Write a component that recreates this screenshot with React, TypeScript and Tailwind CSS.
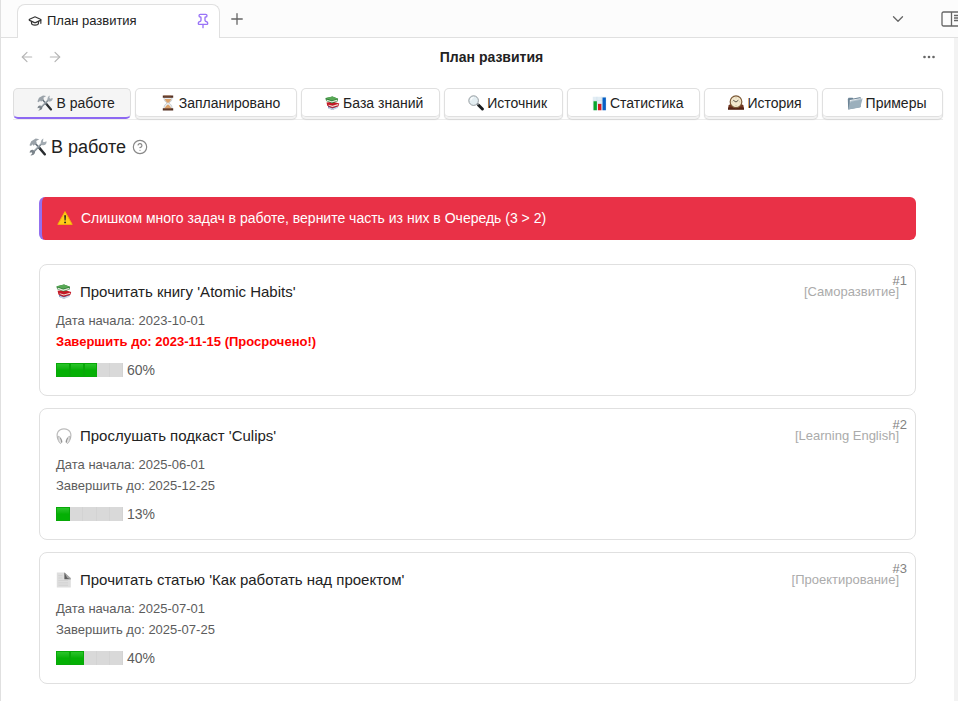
import type { ReactNode } from 'react';
import { ArrowLeft, ArrowRight, ChevronDown, GraduationCap, Pin, Plus, CircleHelp } from 'lucide-react';

type IconProps = { className?: string };

function Tools({ className }: IconProps) {
  return (
    <svg viewBox="0 0 20 20" className={className} aria-hidden="true">
      <path d="M11.500 11 17.500 18" stroke="#292d30" strokeWidth="2.800" strokeLinecap="round" />
      <path d="M5.500 4.500 12 11.500" stroke="#65707a" strokeWidth="1.800" />
      <path d="M.500 8 2.500 3.500 7.500 .500l4 .800-3.500 2L8.500 5.500 5 8.500 3.800 7 2.300 9z" fill="#9aa2a9" />
      <path d="M4 16.500 15 5.500" stroke="#828c94" strokeWidth="1.900" strokeLinecap="round" />
      <path d="M16 .500 15.500 3.800 16.500 4.800 19.500 3.700C20 7 17 9 14.300 7.800 12 6 13.200 1.500 16 .500z" fill="#a3abb2" />
      <path d="M6.500 14.500C7.500 17.500 4.500 20 1.500 19.300L4 17.300 3.200 15.800.700 16.500C.800 13.300 3.800 12 6.500 14.500z" fill="#7a838a" />
      <path d="m5 14.500 8-8" stroke="#c7ced2" strokeWidth=".7" />
    </svg>
  );
}

function Hourglass({ className }: IconProps) {
  return (
    <svg viewBox="0 0 20 20" className={className} aria-hidden="true">
      <path d="M5 3h10c0 4-1 5-4 7 3 2 4 3 4 7H5c0-4 1-5 4-7-3-2-4-3-4-7z" fill="#e8edf0" stroke="#aeb5ba" strokeWidth=".7" />
      <path d="M6 5h8c-.5 2.500-2 3.500-4 5-2-1.500-3.500-2.500-4-5zM10 12c2 1.500 3.500 2.500 4 5H6c.5-2.500 2-3.500 4-5z" fill="#dca36d" />
      <path d="M3.500 .500h13v3h-13zM3.500 16.500h13v3h-13z" fill="#543022" />
      <path d="M5 1.200h9M5 17.200h9" stroke="#a66b49" strokeWidth=".8" />
    </svg>
  );
}

function Books({ className }: IconProps) {
  return (
    <svg viewBox="0 0 20 20" className={className} aria-hidden="true">
      <path d="m4 13 10-1.500 3.500 3-7.500 4-6-2.500z" fill="#4a5fa0" />
      <path d="m4.500 14.800 5.500 1.700 7-2.500v2l-7 2.700-5.500-2z" fill="#ced7e3" />
      <path d="m2 8.500 9-1 8 2.500-1 3.500-8.500 2.500-6.500-3z" fill="#c41a27" />
      <path d="m4.500 11.500 5.500 1.500 7.500-2.200v1.500L9.700 14.500l-5-2z" fill="#f1e5dc" />
      <path d="M.500 3 10 .500l7.500 3-.5 3.500-7.500 2.500-8-3z" fill="#287a32" />
      <path d="m2 4.500 7 2.500 7.500-2.200v1.700L9 8.700 2 6.200z" fill="#e0e6d7" />
      <path d="m.500 2.800 9.500-2.300 7.500 3L9 6z" fill="#58a855" />
    </svg>
  );
}

function Magnifier({ className }: IconProps) {
  return (
    <svg viewBox="0 0 20 20" className={className} aria-hidden="true">
      <path d="m13 12.500 5 5" stroke="#171a1c" strokeWidth="3.600" strokeLinecap="round" />
      <path d="m11 10.500 2 2" stroke="#899197" strokeWidth="2" />
      <circle cx="7" cy="7" r="6" fill="#e4eef2" stroke="#7d858a" strokeWidth="1" />
      <path d="M3.500 7A4 4 0 0 1 7 3" stroke="#fff" strokeWidth="1.300" fill="none" />
    </svg>
  );
}

function Chart({ className }: IconProps) {
  return (
    <svg viewBox="0 0 20 20" className={className} aria-hidden="true">
      <path d="M1 1h18v18H1z" fill="#e2edf4" />
      <path d="M1 6h18M1 11h18M6.500 1v18M12.500 1v18" stroke="#c9dce8" strokeWidth=".6" />
      <path d="M2 7h4.500v12H2z" fill="#09a52b" />
      <path d="M8 10.500h4.500V19H8z" fill="#d71920" />
      <path d="M14 2h4.500v17H14z" fill="#075fc5" />
    </svg>
  );
}

function Clock({ className }: IconProps) {
  return (
    <svg viewBox="0 0 20 20" className={className} aria-hidden="true">
      <path d="M.500 17v-4l3-2h13l3 2v4z" fill="#713620" />
      <path d="M0 15.500h20v3H0z" fill="#542313" />
      <circle cx="10" cy="8.500" r="7.300" fill="#f3e8cd" stroke="#7c5a37" strokeWidth="1.500" />
      <path d="m6.500 6.500 3.500 2.300 3-2.300" stroke="#343029" strokeWidth="1" fill="none" />
      <path d="M10 3.200v.8M4.800 8.500h.8M14.400 8.500h.8M10 13v.8" stroke="#8a8069" strokeWidth=".8" />
    </svg>
  );
}

function Folder({ className }: IconProps) {
  return (
    <svg viewBox="0 0 20 20" className={className} aria-hidden="true">
      <path d="m1 5 1-1.500h5L8 4.500l9-2V15L1.500 18z" fill="#6c8496" />
      <path d="m3.500 6.200 13-2v9l-13 2z" fill="#edf1f3" />
      <path d="M4.500 7.500 19.500 4.500 16.500 15.500 1.500 18z" fill="#9bafbc" />
      <path d="m5 7.800 14-2.800" stroke="#c9d5dc" strokeWidth=".8" />
    </svg>
  );
}

function Headphones({ className }: IconProps) {
  return (
    <svg viewBox="0 0 20 20" className={className} aria-hidden="true">
      <path d="M3 15C-1 7 3 1 10 1s11 6 7 14" fill="none" stroke="#bcbcbc" strokeWidth="1.500" />
      <path d="M2.500 10.500C4.500 10 7 13 7.500 17.500l-1.700 2C3.500 18.500 2 14.500 2.500 10.500zM17.500 10.500C15.500 10 13 13 12.500 17.500l1.700 2c2.300-1 3.800-5 3.300-9z" fill="#e0e0e0" stroke="#a0a0a0" strokeWidth=".8" />
      <path d="M5 12.500c1 1 2 3 2.200 5.500M15 12.500c-1 1-2 3-2.200 5.500" stroke="#858585" strokeWidth="1.100" fill="none" />
    </svg>
  );
}

function Page({ className }: IconProps) {
  return (
    <svg viewBox="0 0 20 20" className={className} aria-hidden="true">
      <path d="M1 .500h10l7.500 8.500v10.500H1z" fill="#dedede" />
      <path d="M10.500 .500v8.500h8z" fill="#5d5d5d" />
      <path d="m10.500 .500 8 7V9L14 7.500z" fill="#a5a5a5" />
      <path d="M3 4.500h5M3 7.500h5M3 10.500h12M3 13.500h12M3 16.500h12" stroke="#c9c9c9" strokeWidth=".8" />
    </svg>
  );
}

function Warning({ className }: IconProps) {
  return (
    <svg viewBox="0 0 20 20" className={className} aria-hidden="true">
      <path d="M10 2 19 18H1z" fill="#ffcd18" stroke="#f3b40c" strokeWidth="1.200" strokeLinejoin="round" />
      <path d="M9 6.500h2.200l-.4 6.500H9.400z" fill="#292521" />
      <circle cx="10.100" cy="15.500" r="1.200" fill="#292521" />
    </svg>
  );
}

function SidebarIcon({ className }: IconProps) {
  return (
    <svg viewBox="0 0 21 16" className={className} fill="none" stroke="currentColor" strokeWidth="1.300" aria-hidden="true">
      <rect x="1" y="1" width="19" height="14" rx="1.500" />
      <path d="M10.500 1v14M13 4.500h5M13 7h5M13 9.500h5" />
    </svg>
  );
}

const sections: { label: string; icon: ReactNode }[] = [
  { label: 'В работе', icon: <Tools className="size-4" /> },
  { label: 'Запланировано', icon: <Hourglass className="size-4" /> },
  { label: 'База знаний', icon: <Books className="size-[15px]" /> },
  { label: 'Источник', icon: <Magnifier className="size-4" /> },
  { label: 'Статистика', icon: <Chart className="size-[15px]" /> },
  { label: 'История', icon: <Clock className="size-4" /> },
  { label: 'Примеры', icon: <Folder className="size-4" /> },
];

type Task = {
  title: string;
  icon: ReactNode;
  category: string;
  start: string;
  due: string;
  overdue?: boolean;
  filled: number;
  percent: number;
};

const tasks: Task[] = [
  { title: "Прочитать книгу 'Atomic Habits'", icon: <Books className="size-4" />, category: 'Саморазвитие', start: '2023-10-01', due: '2023-11-15', overdue: true, filled: 3, percent: 60 },
  { title: "Прослушать подкаст 'Culips'", icon: <Headphones className="size-4" />, category: 'Learning English', start: '2025-06-01', due: '2025-12-25', filled: 1, percent: 13 },
  { title: "Прочитать статью 'Как работать над проектом'", icon: <Page className="size-4" />, category: 'Проектирование', start: '2025-07-01', due: '2025-07-25', filled: 2, percent: 40 },
];

function TaskCard({ task, number }: { task: Task; number: number }) {
  return (
    <article className="relative rounded-lg border border-[#e0e0e0] px-4 pt-[15px] pb-[15px]">
      <span className="absolute top-2 right-2 text-[13px] leading-4 text-[#828282]">#{number}</span>
      <header className="flex items-center justify-between">
        <h2 className="flex items-center gap-2 text-[15px] leading-6 text-[#222]">
          {task.icon}
          {task.title}
        </h2>
        <span className="text-[13px] leading-6 text-[#ababab]">[{task.category}]</span>
      </header>
      <div className="mt-[6px] text-[13px] leading-[21px] text-[#5c5c5c]">
        <p>Дата начала: {task.start}</p>
        <p className={task.overdue ? 'font-bold text-[#ff0000]' : ''}>
          Завершить до: {task.due}
          {task.overdue && ' (Просрочено!)'}
        </p>
      </div>
      <div className="mt-2 flex items-center gap-1 text-sm leading-5 text-[#5c5c5c]">
        <div className="flex h-[14px] w-[67px]" aria-hidden="true">
          {[0, 1, 2, 3, 4].map((cell) => (
            <span
              key={cell}
              className={
                cell < task.filled
                  ? 'flex-1 border border-[#08a808] bg-linear-to-b from-[#28c428] via-[#04b004] to-[#04b004]'
                  : 'flex-1 border-r border-[#d3d3d3] bg-[#d9d9d9]'
              }
            />
          ))}
        </div>
        <span>{task.percent}%</span>
      </div>
    </article>
  );
}

export default function App() {
  return (
    <div className="flex min-h-screen flex-col overflow-hidden border-l border-[#e0e0e0] bg-white font-['Liberation_Sans',Arial,sans-serif] text-[#222]">
      <header className="flex h-[38px] items-end bg-[#fcfcfc]">
        <div className="w-4 self-stretch border-b border-[#e0e0e0]" />
        <div className="flex h-[34px] w-[203px] items-center rounded-t-lg border border-b-0 border-[#e0e0e0] bg-white pr-2 pb-[2px] pl-[10px]">
          <GraduationCap className="size-[14px] text-[#333]" strokeWidth={2} />
          <span className="ml-[5px] flex-1 text-[13px] leading-4">План развития</span>
          <button type="button" aria-label="Открепить">
            <Pin className="size-4 text-[#9973f7]" strokeWidth={2} />
          </button>
        </div>
        <div className="flex flex-1 items-center self-stretch border-b border-[#e0e0e0] pl-2 text-[#666]">
          <button type="button" aria-label="Новая вкладка"><Plus className="size-[18px]" strokeWidth={1.75} /></button>
          <button type="button" className="ml-auto" aria-label="Список вкладок"><ChevronDown className="size-[18px]" strokeWidth={1.75} /></button>
          <button type="button" className="-mr-1 ml-[34px]" aria-label="Боковая панель"><SidebarIcon className="h-4 w-[21px]" /></button>
        </div>
      </header>

      <div className="flex flex-1 flex-col border-r-4 border-[#f3f3f3]">
        <nav className="flex h-[38px] items-center px-[18px]">
          <div className="flex flex-1 gap-3 text-[#b5b5b5]">
            <button type="button" aria-label="Назад"><ArrowLeft className="size-4" strokeWidth={1.75} /></button>
            <button type="button" aria-label="Вперёд"><ArrowRight className="size-4" strokeWidth={1.75} /></button>
          </div>
          <h1 className="pl-7 text-sm leading-5 font-bold">План развития</h1>
          <div className="flex flex-1 justify-end text-[#666]">
            <button type="button" aria-label="Ещё">
              <svg viewBox="0 0 14 14" className="size-[14px]" fill="currentColor" aria-hidden="true">
                <circle cx="2.500" cy="7" r="1.300" />
                <circle cx="7" cy="7" r="1.300" />
                <circle cx="11.500" cy="7" r="1.300" />
              </svg>
            </button>
          </div>
        </nav>

        <div className="mt-3 mr-[11px] ml-3 flex gap-1 border-b border-[#ececec]">
          {sections.map((section, index) => (
            <button
              key={section.label}
              type="button"
              className={`flex h-[31px] flex-auto items-center justify-center gap-[3px] rounded-[5px] border border-b-2 pr-[15px] pl-[23px] text-sm leading-5 whitespace-nowrap ${
                index === 0
                  ? 'border-[#dedede] border-b-[#8d68f2] bg-[#f5f5f5]'
                  : 'border-[#e0e0e0] border-b-[#f3f3f3] bg-white shadow-[inset_0_-1px_0_#e0e0e0,0_1px_1px_#d8d8d8]'
              }`}
            >
              {section.icon}
              {section.label}
            </button>
          ))}
        </div>

        <main className="pt-[14px] pr-[38px] pb-4 pl-[38px]">
          <div className="-ml-[10px] flex items-center text-lg leading-[26px]">
            <Tools className="mr-1 size-[18px]" />
            <h2>В работе</h2>
            <button type="button" className="ml-[6px] text-[#888]" aria-label="Справка">
              <CircleHelp className="size-4" strokeWidth={1.75} />
            </button>
          </div>

          <p role="alert" className="mt-[37px] flex h-[43px] items-center gap-2 rounded-md border-l-[3px] border-[#9370ef] bg-[#e93147] pb-px pl-[15px] text-sm text-white">
            <Warning className="size-4" />
            Слишком много задач в работе, верните часть из них в Очередь (3 &gt; 2)
          </p>

          <div className="mt-6 flex flex-col gap-3">
            {tasks.map((task, index) => (
              <TaskCard key={task.title} task={task} number={index + 1} />
            ))}
          </div>
        </main>
      </div>
    </div>
  );
}
